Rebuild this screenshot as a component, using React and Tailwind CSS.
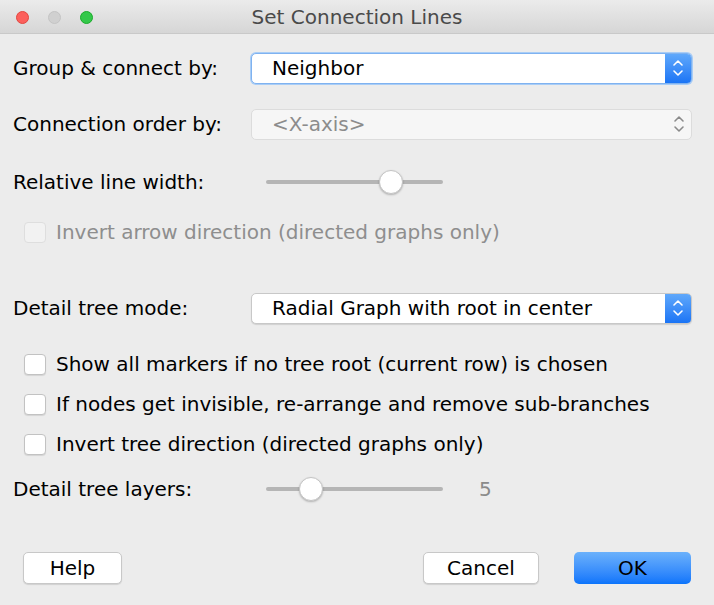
import { useState } from 'react';

const font = { fontFamily: '"DejaVu Sans", "Liberation Sans", sans-serif' };

function Arrows({ active }) {
  const color = active ? '#ffffff' : '#8a8a8a';
  return (
    <svg width="12" height="20" viewBox="0 0 12 20">
      <path d="M2 7 L6 3 L10 7" fill="none" stroke={color} strokeWidth="1.6" strokeLinecap="round" strokeLinejoin="round" />
      <path d="M2 13 L6 17 L10 13" fill="none" stroke={color} strokeWidth="1.6" strokeLinecap="round" strokeLinejoin="round" />
    </svg>
  );
}

function Select({ value, focused, disabled }) {
  if (disabled) {
    return (
      <div className="flex h-[31px] w-[441px] items-center justify-between rounded-[5px] border border-[#dcdcdc] bg-[#f6f6f6] pl-[20px] pr-[6px]">
        <span className="text-[#8c8c8c]">{value}</span>
        <Arrows />
      </div>
    );
  }
  return (
    <div
      className={`flex h-[31px] w-[441px] items-stretch overflow-hidden rounded-[5px] border bg-white ${
        focused ? 'border-[#7fb2f0] shadow-[0_0_0_1px_#a9cdf6]' : 'border-[#c8c8c8] shadow-[0_1px_1px_rgba(0,0,0,0.12)]'
      }`}
    >
      <span className="flex flex-1 items-center pl-[20px] text-black">{value}</span>
      <div className="flex w-[26px] items-center justify-center bg-gradient-to-b from-[#5fa8fb] to-[#1a74f5]">
        <Arrows active />
      </div>
    </div>
  );
}

function Slider({ pos }) {
  return (
    <div className="relative h-[24px] w-[177px]">
      <div className="absolute left-0 right-0 top-[10px] h-[4px] rounded-full bg-[#b5b5b5]" />
      <div
        className="absolute top-0 h-[24px] w-[24px] rounded-full border border-[#c4c4c4] bg-white shadow-[0_1px_2px_rgba(0,0,0,0.25)]"
        style={{ left: pos - 12 }}
      />
    </div>
  );
}

function Check({ label, disabled }) {
  const [on, setOn] = useState(false);
  return (
    <div className="flex h-[40px] items-center" onClick={() => !disabled && setOn((v) => !v)}>
      <div
        className={`ml-[24px] mr-[10px] h-[21px] w-[22px] rounded-[4px] border ${
          disabled ? 'border-[#dedede] bg-[#f2f2f2]' : 'border-[#c2c2c2] bg-white shadow-[0_1px_1px_rgba(0,0,0,0.1)]'
        }`}
      >
        {on && <span className="block text-center text-[14px] leading-[20px]">✓</span>}
      </div>
      <span className={disabled ? 'text-[#8e8e8e]' : 'text-black'}>{label}</span>
    </div>
  );
}

function Button({ children, primary, className = '' }) {
  return (
    <div
      className={`flex h-[32px] items-center justify-center rounded-[5px] ${
        primary
          ? 'bg-gradient-to-b from-[#6bb1fb] to-[#0a74fb] text-black'
          : 'border border-[#c8c8c8] bg-white text-black shadow-[0_1px_1px_rgba(0,0,0,0.12)]'
      } ${className}`}
    >
      {children}
    </div>
  );
}

export default function App() {
  return (
    <div className="h-[605px] w-[714px] overflow-hidden bg-[#ececec] text-[20px]" style={font}>
      <div className="relative flex h-[34px] items-center justify-center border-b border-[#c9c9c9] bg-gradient-to-b from-[#ebebeb] to-[#d6d6d6]">
        <div className="absolute left-[16px] top-[11px] flex gap-[19px]">
          <span className="h-[13px] w-[13px] rounded-full border border-[#e2463f] bg-[#fc605c]" />
          <span className="h-[13px] w-[13px] rounded-full border border-[#c4c4c4] bg-[#d0d0d0]" />
          <span className="h-[13px] w-[13px] rounded-full border border-[#1aab2a] bg-[#34c84a]" />
        </div>
        <span className="text-[#4a4a4a]">Set Connection Lines</span>
      </div>

      <div className="px-[13px] pt-[18px]">
        <div className="flex h-[32px] items-center">
          <span className="w-[238px]">Group &amp; connect by:</span>
          <Select value="Neighbor" focused />
        </div>
        <div className="mt-[24px] flex h-[32px] items-center">
          <span className="w-[238px]">Connection order by:</span>
          <Select value="<X-axis>" disabled />
        </div>
        <div className="mt-[30px] flex h-[24px] items-center">
          <span className="w-[253px]">Relative line width:</span>
          <Slider pos={125} />
        </div>
        <div className="-mx-[13px] mt-[18px]">
          <Check label="Invert arrow direction (directed graphs only)" disabled />
        </div>
        <div className="mt-[40px] flex h-[32px] items-center">
          <span className="w-[238px]">Detail tree mode:</span>
          <Select value="Radial Graph with root in center" />
        </div>
        <div className="-mx-[13px] mt-[20px]">
          <Check label="Show all markers if no tree root (current row) is chosen" />
          <Check label="If nodes get invisible, re-arrange and remove sub-branches" />
          <Check label="Invert tree direction (directed graphs only)" />
        </div>
        <div className="mt-[13px] flex h-[24px] items-center">
          <span className="w-[253px]">Detail tree layers:</span>
          <Slider pos={45} />
          <span className="ml-[36px] text-[#8a8a8a]">5</span>
        </div>
        <div className="mt-[51px] flex items-center">
          <Button className="ml-[10px] w-[99px]">Help</Button>
          <div className="flex-1" />
          <Button className="w-[116px]">Cancel</Button>
          <Button primary className="ml-[35px] mr-[10px] w-[117px]">OK</Button>
        </div>
      </div>
    </div>
  );
}
